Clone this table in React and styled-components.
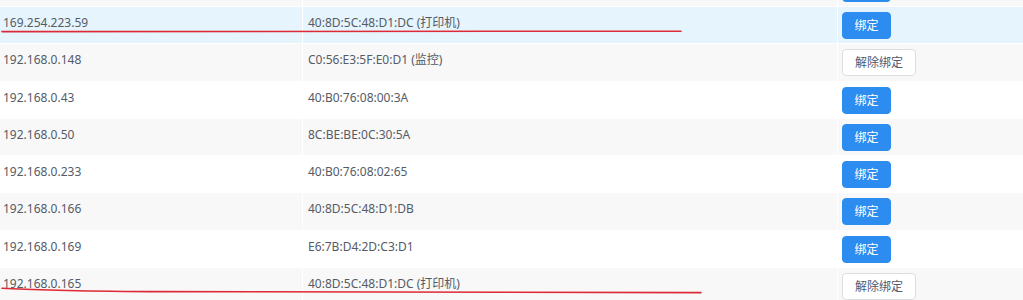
import React from 'react';
import styled, { createGlobalStyle } from 'styled-components';

const GlobalStyle = createGlobalStyle`
	html, body {
		margin: 0;
		padding: 0;
		background: #fff;
	}
	body {
		font-family: "Noto Sans", "Noto Sans CJK SC", sans-serif;
	}
`;

// first entry is the row scrolled mostly out of view above the list
const devices = [
	{ key: 'prev', ip: '', mac: '', bound: false, hidden: true },
	{ key: 'a', ip: '169.254.223.59', mac: '40:8D:5C:48:D1:DC (打印机)', bound: false, active: true },
	{ key: 'b', ip: '192.168.0.148', mac: 'C0:56:E3:5F:E0:D1 (监控)', bound: true },
	{ key: 'c', ip: '192.168.0.43', mac: '40:B0:76:08:00:3A', bound: false },
	{ key: 'd', ip: '192.168.0.50', mac: '8C:BE:BE:0C:30:5A', bound: false },
	{ key: 'e', ip: '192.168.0.233', mac: '40:B0:76:08:02:65', bound: false },
	{ key: 'f', ip: '192.168.0.166', mac: '40:8D:5C:48:D1:DB', bound: false },
	{ key: 'g', ip: '192.168.0.169', mac: 'E6:7B:D4:2D:C3:D1', bound: false },
	{ key: 'h', ip: '192.168.0.165', mac: '40:8D:5C:48:D1:DC (打印机)', bound: true },
];

const rowBackground = (index, active) => {
	if (active) return '#e5f4fd';
	return index % 2 === 0 ? '#f8f8f9' : '#ffffff';
};

const App = () => {
	return (
		<>
			<GlobalStyle />
			<Viewport>
				<Table>
					{devices.map((d, index) => (
						<Row key={d.key} $bg={rowBackground(index, d.active)}>
							<Cell $first>{d.ip}</Cell>
							<Cell>{d.mac}</Cell>
							<ActionCell>
								{d.bound ? (
									<GhostButton>解除绑定</GhostButton>
								) : (
									<PrimaryButton aria-label='绑定'>
										{d.hidden ? null : '绑定'}
									</PrimaryButton>
								)}
							</ActionCell>
						</Row>
					))}
				</Table>
				<Marks width='1023' height='300' viewBox='0 0 1023 300'>
					<path d='M2 31.6 L681 31.2' />
					<path d='M2 288.2 Q 40 290.6 150 291.6 L701 292.6' />
				</Marks>
			</Viewport>
		</>
	);
};

export default App;

const Viewport = styled.div`
	position: relative;
	width: 1023px;
	height: 300px;
	overflow: hidden;
	background: #fff;
`;

const Table = styled.div`
	display: flex;
	flex-direction: column;
	gap: 1px;
	margin-top: -30.3px;
	background: #fff;
	font-size: 12px;
	color: #555b66;
`;

const Row = styled.div`
	display: grid;
	grid-template-columns: 302px 534px 1fr;
	column-gap: 1px;
	height: 36.3px;

	& > div {
		background: ${(p) => p.$bg};
	}
`;

const Cell = styled.div`
	padding: 8px 5px 0 ${(p) => (p.$first ? '3px' : '5px')};
	line-height: 16px;
	white-space: nowrap;
	overflow: hidden;
`;

const ActionCell = styled.div`
	display: flex;
	align-items: flex-start;
	padding: 5px 4px 0;
`;

const BaseButton = styled.button`
	height: 27px;
	padding: 0;
	border-radius: 4px;
	font-family: "Noto Sans", "Noto Sans CJK SC", sans-serif;
	font-size: 12px;
	line-height: 25px;
	cursor: pointer;
`;

const PrimaryButton = styled(BaseButton)`
	width: 49px;
	background: #2d8cf0;
	border: 1px solid #2d8cf0;
	color: #fff;
`;

const GhostButton = styled(BaseButton)`
	width: 74px;
	background: #fff;
	border: 1px solid #dcdee2;
	color: #515a6e;
`;

const Marks = styled.svg`
	position: absolute;
	left: 0;
	top: 0;
	pointer-events: none;

	path {
		fill: none;
		stroke: #dd2a35;
		stroke-width: 1.6;
		stroke-linecap: round;
	}
`;
